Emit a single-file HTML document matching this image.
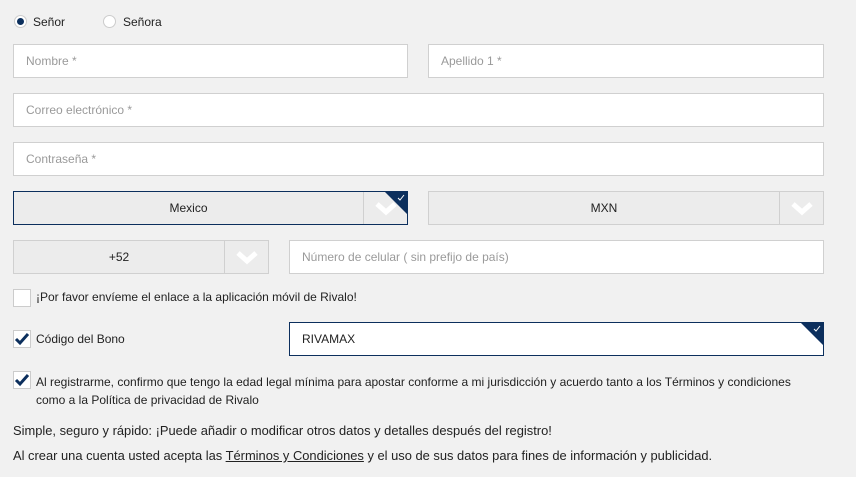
<!DOCTYPE html>
<html><head><meta charset="utf-8"><style>
*{box-sizing:border-box;margin:0;padding:0}
body{width:856px;height:477px;background:#f1f1f1;font-family:"Liberation Sans",sans-serif;font-size:12px;color:#222;position:relative;overflow:hidden}
.a{position:absolute}
.in{position:absolute;height:34px;background:#fff;border:1px solid #d0d0d0;color:#9a9a9a;padding-left:12px;line-height:32px}
.sel{position:absolute;height:34px;background:#ececec;border:1px solid #d0d0d0;text-align:center;line-height:32px;color:#222}
.sel .dv{position:absolute;right:0;top:0;bottom:0;width:44px;border-left:1px solid #d0d0d0}
.nav{border-color:#0c2f5d}
.cb{position:absolute;width:18px;height:18px;background:#fff;border:1px solid #ccc}
.corner{position:absolute;right:0;top:0;width:0;height:0;border-top:22px solid #0c2f5d;border-left:22px solid transparent}
</style></head><body>
<div class="a" style="left:14px;top:15px;width:13px;height:13px;border-radius:50%;border:1px solid #ccc;background:#fff"><div style="position:absolute;left:2px;top:2px;width:7px;height:7px;border-radius:50%;background:#0c2f5d"></div></div>
<div class="a" style="left:33px;top:15px">Señor</div>
<div class="a" style="left:103px;top:15px;width:13px;height:13px;border-radius:50%;border:1px solid #ccc;background:#fff"></div>
<div class="a" style="left:123px;top:15px">Señora</div>

<div class="in" style="left:13px;top:44px;width:395px">Nombre *</div>
<div class="in" style="left:428px;top:44px;width:396px">Apellido 1 *</div>
<div class="in" style="left:13px;top:93px;width:811px">Correo electrónico *</div>
<div class="in" style="left:13px;top:142px;width:811px">Contraseña *</div>

<div class="sel nav" style="left:13px;top:191px;width:395px"><span style="margin-right:44px">Mexico</span><div class="dv"><svg class="a" style="left:10px;top:8px" width="24" height="16" viewBox="0 0 24 16"><path d="M3 4l9 8 9-8" stroke="#fff" stroke-width="5" fill="none"/></svg><div class="corner"></div><svg class="a" style="right:2px;top:2px" width="8" height="7"><path d="M1 4l2 2 4-5" stroke="#fff" stroke-width="1" fill="none"/></svg></div></div>
<div class="sel" style="left:428px;top:191px;width:396px"><span style="margin-right:44px">MXN</span><div class="dv"><svg class="a" style="left:10px;top:8px" width="24" height="16" viewBox="0 0 24 16"><path d="M3 4l9 8 9-8" stroke="#fff" stroke-width="5" fill="none"/></svg></div></div>

<div class="sel" style="left:13px;top:240px;width:256px"><span style="margin-right:44px">+52</span><div class="dv"><svg class="a" style="left:10px;top:8px" width="24" height="16" viewBox="0 0 24 16"><path d="M3 4l9 8 9-8" stroke="#fff" stroke-width="5" fill="none"/></svg></div></div>
<div class="in" style="left:289px;top:240px;width:535px">Número de celular ( sin prefijo de país)</div>

<div class="cb" style="left:13px;top:289px"></div>
<div class="a" style="left:36px;top:290px">¡Por favor envíeme el enlace a la aplicación móvil de Rivalo!</div>

<div class="cb" style="left:13px;top:330px"><svg width="16" height="16"><path d="M2 8l4 4 8-9" stroke="#0c2f5d" stroke-width="3" fill="none"/></svg></div>
<div class="a" style="left:36px;top:332px">Código del Bono</div>
<div class="in nav" style="left:289px;top:322px;width:535px;color:#222">RIVAMAX<div class="corner"></div><svg class="a" style="right:2px;top:2px" width="8" height="7"><path d="M1 4l2 2 4-5" stroke="#fff" stroke-width="1" fill="none"/></svg></div>

<div class="cb" style="left:13px;top:371px"><svg width="16" height="16"><path d="M2 8l4 4 8-9" stroke="#0c2f5d" stroke-width="3" fill="none"/></svg></div>
<div class="a" style="left:36px;top:373px;line-height:18px;width:780px">Al registrarme, confirmo que tengo la edad legal mínima para apostar conforme a mi jurisdicción y acuerdo tanto a los Términos y condiciones como a la Política de privacidad de Rivalo</div>

<div class="a" style="left:13px;top:423px;font-size:12.9px">Simple, seguro y rápido: ¡Puede añadir o modificar otros datos y detalles después del registro!</div>
<div class="a" style="left:13px;top:448px;font-size:12.9px">Al crear una cuenta usted acepta las <u>Términos y Condiciones</u> y el uso de sus datos para fines de información y publicidad.</div>
</body></html>
